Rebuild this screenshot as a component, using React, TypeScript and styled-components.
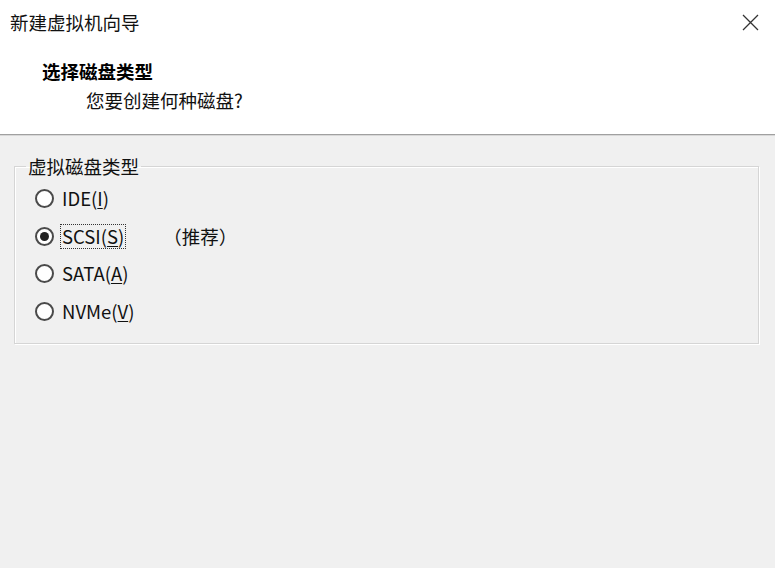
import React, { useState } from "react";
import styled, { createGlobalStyle } from "styled-components";

const GlobalStyle = createGlobalStyle`
    html, body {
        margin: 0;
        padding: 0;
        background: #f0f0f0;
    }
    body {
        font-family: "Noto Sans CJK SC", "Noto Sans", sans-serif;
        color: #000;
    }
`;

const Window = styled.div`
    width: 775px;
    height: 568px;
    display: flex;
    flex-direction: column;
    background: #f0f0f0;
    overflow: hidden;
`;

const Header = styled.header`
    height: 134px;
    flex-shrink: 0;
    background: #fff;
    border-bottom: 1px solid #a0a0a0;
    box-shadow: 0 1px 0 #d8d8d8;
    display: flex;
    flex-direction: column;
`;

const TitleBar = styled.div`
    height: 44px;
    display: flex;
    align-items: center;
    justify-content: space-between;
    padding: 0 16px 0 10px;
`;

const Title = styled.span`
    font-size: 18.5px;
    line-height: 28px;
    color: #111;
`;

const CloseButton = styled.button`
    width: 18px;
    height: 18px;
    padding: 0;
    border: none;
    background: transparent;
    display: flex;
    align-items: center;
    justify-content: center;
    cursor: pointer;
`;

const Heading = styled.div`
    margin: 13px 0 0 42px;
    font-size: 18.5px;
    line-height: 28px;
    font-weight: 700;
    color: #000;
`;

const SubHeading = styled.div`
    margin: 1px 0 0 86px;
    font-size: 18.5px;
    line-height: 28px;
    color: #111;
`;

const Body = styled.main`
    flex: 1;
    padding-top: 17px;
`;

const GroupBox = styled.fieldset`
    margin: 0 16px 0 14px;
    padding: 0 0 13px 20px;
    border: 1px solid #d5d5d5;
    box-shadow: inset 1px 1px 0 #fff, 1px 1px 0 #fff;
    min-width: 0;
`;

const Legend = styled.legend`
    margin-left: -9px;
    padding: 0 2px;
    font-size: 18.5px;
    line-height: 28px;
    color: #111;
`;

const Row = styled.label`
    height: 37.5px;
    display: flex;
    align-items: center;
    font-size: 18.5px;
    cursor: default;
`;

const Circle = styled.span<{ $checked: boolean }>`
    width: 19px;
    height: 19px;
    box-sizing: border-box;
    border: 2px solid #4a4a4a;
    border-radius: 50%;
    background: #fff;
    display: flex;
    align-items: center;
    justify-content: center;
    flex-shrink: 0;

    &::after {
        content: "";
        width: 9px;
        height: 9px;
        border-radius: 50%;
        background: #222;
        display: ${(p) => (p.$checked ? "block" : "none")};
    }
`;

const Caption = styled.span<{ $focused: boolean }>`
    margin-left: 6px;
    padding: 0 1px;
    line-height: 23px;
    border: 1px dotted ${(p) => (p.$focused ? "#333" : "transparent")};
    color: #111;
`;

const Key = styled.span`
    text-decoration: underline;
    text-underline-offset: 2px;
`;

const Note = styled.span`
    margin-left: 37px;
    color: #111;
`;

const HiddenInput = styled.input`
    display: none;
`;

type Option = { id: string; name: string; key: string; note?: string };

const options: Option[] = [
    { id: "ide", name: "IDE", key: "I" },
    { id: "scsi", name: "SCSI", key: "S", note: "（推荐）" },
    { id: "sata", name: "SATA", key: "A" },
    { id: "nvme", name: "NVMe", key: "V" },
];

const App = () => {
    const [selected, setSelected] = useState("scsi");

    return (
        <>
            <GlobalStyle />
            <Window>
                <Header>
                    <TitleBar>
                        <Title>新建虚拟机向导</Title>
                        <CloseButton aria-label="关闭">
                            <svg width="17" height="17" viewBox="0 0 17 17">
                                <path d="M1 1 L16 16 M16 1 L1 16" stroke="#333" strokeWidth="1.3" fill="none" />
                            </svg>
                        </CloseButton>
                    </TitleBar>
                    <Heading>选择磁盘类型</Heading>
                    <SubHeading>您要创建何种磁盘?</SubHeading>
                </Header>
                <Body>
                    <GroupBox>
                        <Legend>虚拟磁盘类型</Legend>
                        {options.map((opt) => (
                            <Row key={opt.id}>
                                <HiddenInput
                                    type="radio"
                                    name="disk"
                                    checked={selected === opt.id}
                                    onChange={() => setSelected(opt.id)}
                                />
                                <Circle $checked={selected === opt.id} />
                                <Caption $focused={selected === opt.id}>
                                    {opt.name}(<Key>{opt.key}</Key>)
                                </Caption>
                                {opt.note && <Note>{opt.note}</Note>}
                            </Row>
                        ))}
                    </GroupBox>
                </Body>
            </Window>
        </>
    );
};

export default App;
